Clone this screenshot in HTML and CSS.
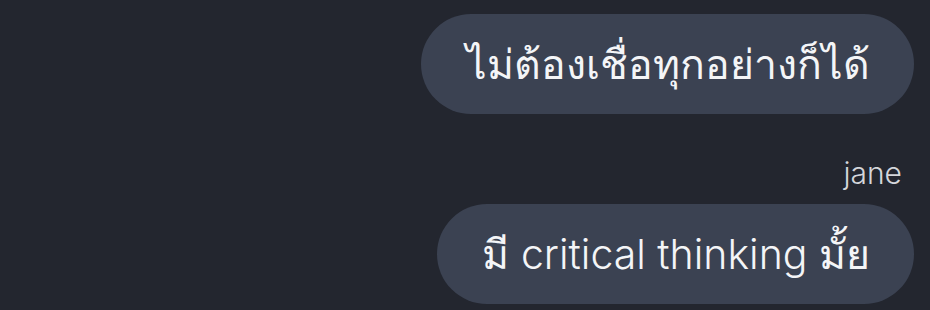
FILE: index.html
```html
<!DOCTYPE html>
<html lang="th">
<head>
  <meta charset="UTF-8" />
  <meta name="viewport" content="width=device-width, initial-scale=1.0" />
  <title>Chat</title>
  <link rel="stylesheet" href="styles.css">
</head>
<body>
  <div class="chat">
    <div class="msg">
      <div class="bubble">ไม่ต้องเชื่อทุกอย่างก็ได้</div>
    </div>
    <div class="msg">
      <div class="name">jane</div>
      <div class="bubble">มี critical thinking มั้ย</div>
    </div>
  </div>
</body>
</html>
```

FILE: styles.css
```css
body {
  margin: 0;
  background-color: #23262f;
  font-family: Inter, "Noto Sans", "DejaVu Sans", sans-serif;
  height: 310px;
  overflow: hidden;
}
.chat {
  display: flex;
  flex-direction: column;
  align-items: flex-end;
  gap: 41px;
  padding: 14px 16px 0 0;
}
.msg {
  display: flex;
  flex-direction: column;
  align-items: flex-end;
}
.name {
  color: #d4d6db;
  font-size: 30px;
  font-weight: 300;
  line-height: 36px;
  margin: 0 12px 13px 0;
}
.bubble {
  background-color: #3b4252;
  color: #f4f5f7;
  font-size: 41px;
  font-weight: 300;
  height: 100px;
  line-height: 100px;
  padding: 0 44px 0 45px;
  border-radius: 50px;
  white-space: nowrap;
}
```
